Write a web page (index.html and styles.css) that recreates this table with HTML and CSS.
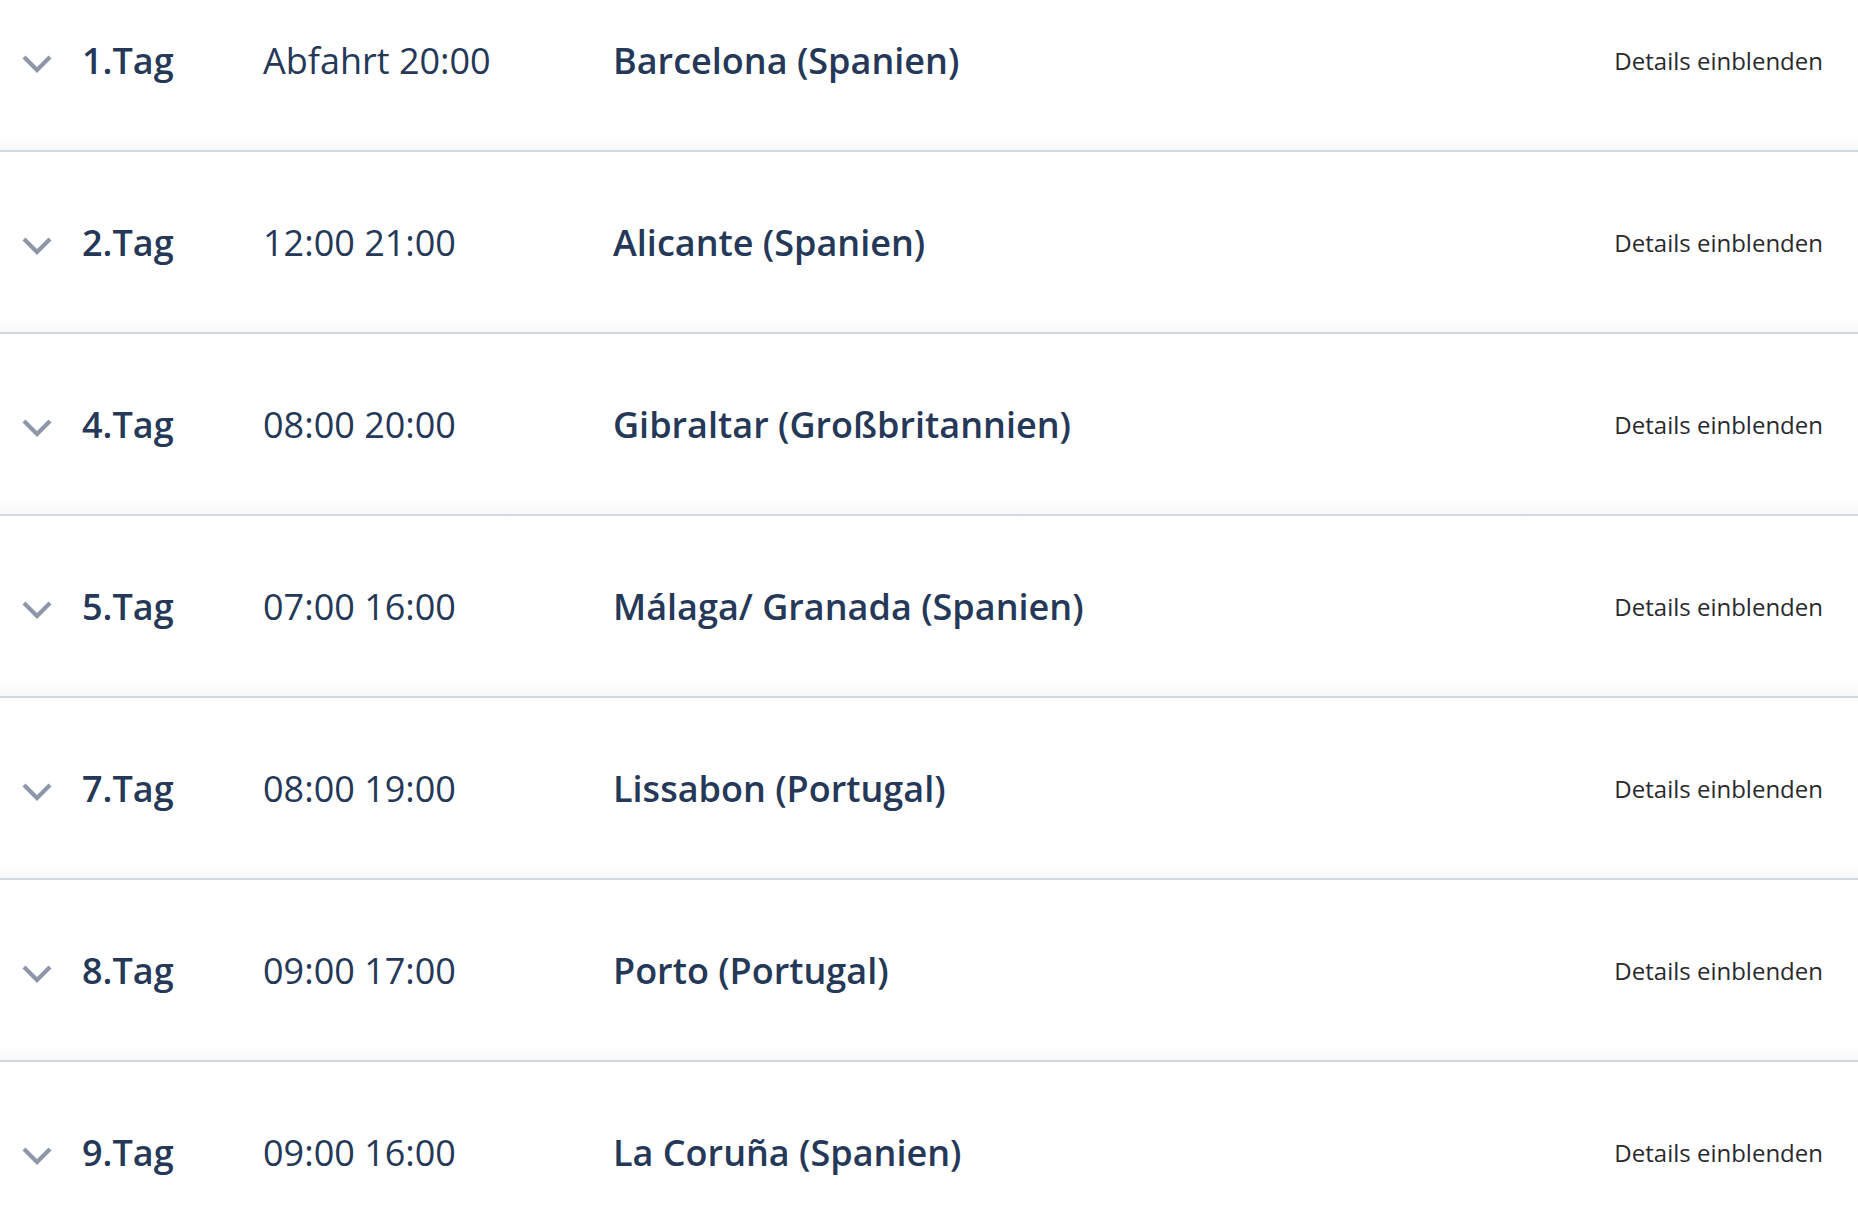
FILE: index.html
```html
<!DOCTYPE html>
<html lang="de">
<head>
<meta charset="utf-8">
<title>Reiseverlauf</title>
<link rel="stylesheet" href="styles.css">
</head>
<body>
<div class="itinerary">
  <div class="row">
    <span class="chev"><svg viewBox="0 0 30 18" width="30" height="18"><path d="M2 2 L15 15 L28 2" fill="none" stroke="currentColor" stroke-width="4.2"/></svg></span>
    <span class="day">1.Tag</span>
    <span class="time">Abfahrt 20:00</span>
    <span class="place">Barcelona (Spanien)</span>
    <span class="details">Details einblenden</span>
  </div>
  <div class="row">
    <span class="chev"><svg viewBox="0 0 30 18" width="30" height="18"><path d="M2 2 L15 15 L28 2" fill="none" stroke="currentColor" stroke-width="4.2"/></svg></span>
    <span class="day">2.Tag</span>
    <span class="time">12:00 21:00</span>
    <span class="place">Alicante (Spanien)</span>
    <span class="details">Details einblenden</span>
  </div>
  <div class="row">
    <span class="chev"><svg viewBox="0 0 30 18" width="30" height="18"><path d="M2 2 L15 15 L28 2" fill="none" stroke="currentColor" stroke-width="4.2"/></svg></span>
    <span class="day">4.Tag</span>
    <span class="time">08:00 20:00</span>
    <span class="place">Gibraltar (Großbritannien)</span>
    <span class="details">Details einblenden</span>
  </div>
  <div class="row">
    <span class="chev"><svg viewBox="0 0 30 18" width="30" height="18"><path d="M2 2 L15 15 L28 2" fill="none" stroke="currentColor" stroke-width="4.2"/></svg></span>
    <span class="day">5.Tag</span>
    <span class="time">07:00 16:00</span>
    <span class="place">Málaga/ Granada (Spanien)</span>
    <span class="details">Details einblenden</span>
  </div>
  <div class="row">
    <span class="chev"><svg viewBox="0 0 30 18" width="30" height="18"><path d="M2 2 L15 15 L28 2" fill="none" stroke="currentColor" stroke-width="4.2"/></svg></span>
    <span class="day">7.Tag</span>
    <span class="time">08:00 19:00</span>
    <span class="place">Lissabon (Portugal)</span>
    <span class="details">Details einblenden</span>
  </div>
  <div class="row">
    <span class="chev"><svg viewBox="0 0 30 18" width="30" height="18"><path d="M2 2 L15 15 L28 2" fill="none" stroke="currentColor" stroke-width="4.2"/></svg></span>
    <span class="day">8.Tag</span>
    <span class="time">09:00 17:00</span>
    <span class="place">Porto (Portugal)</span>
    <span class="details">Details einblenden</span>
  </div>
  <div class="row">
    <span class="chev"><svg viewBox="0 0 30 18" width="30" height="18"><path d="M2 2 L15 15 L28 2" fill="none" stroke="currentColor" stroke-width="4.2"/></svg></span>
    <span class="day">9.Tag</span>
    <span class="time">09:00 16:00</span>
    <span class="place">La Coruña (Spanien)</span>
    <span class="details">Details einblenden</span>
  </div>
</div>
</body>
</html>
```
FILE: styles.css
```css
html, body {
  margin: 0;
  padding: 0;
  background: #ffffff;
  overflow: hidden;
}

body {
  font-family: "Open Sans", "Noto Sans", sans-serif;
  color: #253858;
}

.itinerary {
  margin-top: -30px;
}

.row {
  display: grid;
  grid-template-columns: 82px 181px 350px 1fr auto;
  align-items: center;
  height: 180px;
  padding-right: 35px;
  border-bottom: 2px solid #d3d7df;
  background: linear-gradient(to bottom, #ffffff 0, #ffffff 166px, #f7f8f9 180px);
}

.chev {
  display: flex;
  padding-left: 22px;
  margin-top: 8px;
  color: #8e97a8;
}

.day {
  font-size: 36px;
  font-weight: 600;
}

.time {
  font-size: 36px;
  font-weight: 400;
}

.place {
  font-size: 36px;
  font-weight: 600;
}

.details {
  font-size: 24px;
  font-weight: 400;
  color: #2a2a2e;
}
```
